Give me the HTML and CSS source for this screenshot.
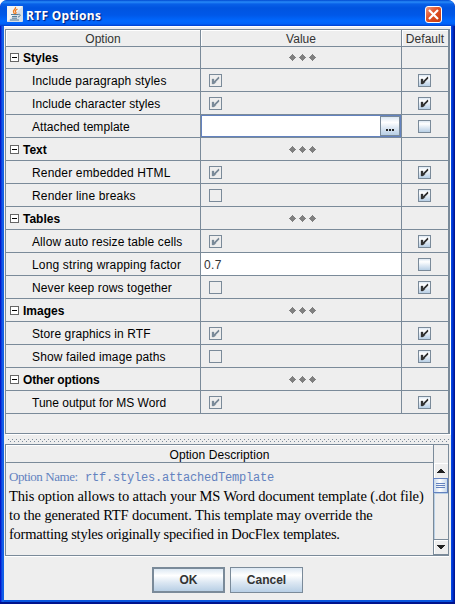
FILE: index.html
```html
<!DOCTYPE html>
<html lang="en">
<head>
<meta charset="utf-8">
<title>RTF Options</title>
<link rel="stylesheet" href="styles.css">
</head>
<body>
<svg class="defs" width="0" height="0" aria-hidden="true">
  <defs>
    <symbol id="tick" viewBox="0 0 13 13"><path d="M3 5h2v2h1V6h1V5h1V4h1V3h1v2H9v1H8v1H7v1.500H6v1H5v.5H3z" fill="currentColor" stroke="currentColor" stroke-width=".3"/></symbol>
    <symbol id="diamonds" viewBox="0 0 27 7"><path d="M3 0h1v1h1v1h1v1h1v1H6v1H5v1H4v1H3V6H2V5H1V4H0V3h1V2h1V1h1zM13 0h1v1h1v1h1v1h1v1h-1v1h-1v1h-1v1h-1V6h-1V5h-1V4h-1V3h1V2h1V1h1zM23 0h1v1h1v1h1v1h1v1h-1v1h-1v1h-1v1h-1V6h-1V5h-1V4h-1V3h1V2h1V1h1z" fill="#808080"/></symbol>
  </defs>
</svg>
<div class="window">
  <header class="titlebar">
    <svg class="java" width="16" height="16" viewBox="0 0 16 16">
      <rect width="16" height="16" rx="1" fill="#d9dfe5"/><path d="M0 0h16L0 16z" fill="#f3f4f4"/>
      <path d="M8.5 1c1 2-3 3-2 5l1 2M10.5 3c-2 1-3 2-1.500 3.500L8.500 8" fill="none" stroke="#ef7d22" stroke-width="1.300"/>
      <path d="M4 8.500h7M5 10.500h5M5 12.200h5M3 14h9M11 8.500c3-1 3 2 0 2.500" fill="none" stroke="#567f9b"/>
    </svg>
    <h1>RTF Options</h1>
    <button class="close" aria-label="Close"><svg width="15" height="15" viewBox="0 0 15 15"><path d="M3 3l9 9M12 3l-9 9" stroke="#fff" stroke-width="2.200"/></svg></button>
  </header>
  <main class="content">
    <section class="table">
      <div class="row head"><div>Option</div><div>Value</div><div class="def">Default</div></div>
      <div class="row group"><div><i></i><b>Styles</b></div><div><svg><use href="#diamonds"/></svg></div><div></div></div>
      <div class="row"><div><span class="w1">Include paragraph styles</span></div><div><span class="box off"><svg><use href="#tick"/></svg></span></div><div><span class="box"><svg><use href="#tick"/></svg></span></div></div>
      <div class="row"><div><span class="w2">Include character styles</span></div><div><span class="box off"><svg><use href="#tick"/></svg></span></div><div><span class="box"><svg><use href="#tick"/></svg></span></div></div>
      <div class="row"><div><span class="w3">Attached template</span></div><div class="edit"><button class="more" aria-label="Browse"><svg width="8" height="2" viewBox="0 0 8 2"><path d="M0 0h2v2H0zM3 0h2v2H3zM6 0h2v2H6z" fill="#222"/></svg></button></div><div><span class="box"></span></div></div>
      <div class="row group"><div><i></i><b>Text</b></div><div><svg><use href="#diamonds"/></svg></div><div></div></div>
      <div class="row"><div><span class="w4">Render embedded HTML</span></div><div><span class="box off"><svg><use href="#tick"/></svg></span></div><div><span class="box"><svg><use href="#tick"/></svg></span></div></div>
      <div class="row"><div><span class="w5">Render line breaks</span></div><div><span class="box off"></span></div><div><span class="box"><svg><use href="#tick"/></svg></span></div></div>
      <div class="row group"><div><i></i><b>Tables</b></div><div><svg><use href="#diamonds"/></svg></div><div></div></div>
      <div class="row"><div><span class="w6">Allow auto resize table cells</span></div><div><span class="box off"><svg><use href="#tick"/></svg></span></div><div><span class="box"><svg><use href="#tick"/></svg></span></div></div>
      <div class="row"><div><span class="w7">Long string wrapping factor</span></div><div class="num">0.7</div><div><span class="box"></span></div></div>
      <div class="row"><div><span class="w8">Never keep rows together</span></div><div><span class="box off"></span></div><div><span class="box"><svg><use href="#tick"/></svg></span></div></div>
      <div class="row group"><div><i></i><b>Images</b></div><div><svg><use href="#diamonds"/></svg></div><div></div></div>
      <div class="row"><div><span class="w9">Store graphics in RTF</span></div><div><span class="box off"><svg><use href="#tick"/></svg></span></div><div><span class="box"><svg><use href="#tick"/></svg></span></div></div>
      <div class="row"><div><span class="w10">Show failed image paths</span></div><div><span class="box off"></span></div><div><span class="box"><svg><use href="#tick"/></svg></span></div></div>
      <div class="row group"><div><i></i><b class="other">Other options</b></div><div><svg><use href="#diamonds"/></svg></div><div></div></div>
      <div class="row"><div><span class="w11">Tune output for MS Word</span></div><div><span class="box off"><svg><use href="#tick"/></svg></span></div><div><span class="box"><svg><use href="#tick"/></svg></span></div></div>
    </section>
    <div class="splitter"></div>
    <section class="description">
      <div class="desc-main">
        <h2>Option Description</h2>
        <div class="text">
          <p class="name"><span>Option Name:</span> <code>rtf.styles.attachedTemplate</code></p>
          <p class="l1">This option allows to attach your MS Word document template (.dot file)</p>
          <p class="l2">to the generated RTF document. This template may override the</p>
          <p class="l3">formatting styles originally specified in DocFlex templates.</p>
        </div>
      </div>
      <div class="scroll">
        <div class="corner"></div>
        <div class="arrow"><svg width="8" height="4" viewBox="0 0 8 4"><path d="M3 0h2v1h1v1h1v1h1v1H0V3h1V2h1V1h1z" fill="#222"/></svg></div>
        <div class="thumb"><svg width="9" height="5" viewBox="0 0 9 5"><path d="M0 0h9v1H0zM0 2h9v1H0zM0 4h9v1H0z" fill="#6382bf"/></svg></div>
        <div class="track"></div>
        <div class="arrow down"><svg width="8" height="4" viewBox="0 0 8 4"><path d="M0 0h8v1H7v1H6v1H5v1H3V3H2V2H1V1H0z" fill="#222"/></svg></div>
      </div>
    </section>
    <footer><button class="ok">OK</button><button>Cancel</button></footer>
  </main>
</div>
</body>
</html>
```
FILE: styles.css
```css
* { box-sizing: border-box; }
body { margin: 0; background: #fff; font: 12px/15px "Liberation Sans", Arial, sans-serif; color: #000; }
.defs { display: none; }
h1, h2, p { margin: 0; font-weight: normal; }
button { padding: 0; border-radius: 0; font: inherit; }
.window {
  width: 455px; height: 604px; padding: 0 4px 4px; overflow: hidden;
  border-radius: 7px 7px 0 0;
  background: linear-gradient(90deg, #0000b8 0, #0831d9 1px, #166aee 3px, #0855dd 4px, #0855dd 451px, #003ce6 452px, #001ea0 454px, #00138c 455px);
  box-shadow: inset 0 -2px #00138c;
}
.titlebar {
  height: 26px; margin: 0 -4px; padding: 3px 4px 0 7px; display: flex; align-items: center;
  border-radius: 7px 7px 0 0;
  background: linear-gradient(#0048d0 0, #278af8 2px, #0860e8 4px, #0054e0 8px, #0058e8 15px, #0068ff 21px, #0062f8 24px, #003dcc 26px);
}
.java { margin-top: -1px; }
h1 { margin: 2px 0 0 3px; color: #fff; font: bold 12px/18px "Noto Sans", "Open Sans", sans-serif; text-shadow: 1px 1px 1px #001b78; white-space: nowrap; letter-spacing: .32px; }
.close { width: 17px; height: 17px; margin-left: auto; margin-right: 9px; border: 1px solid #fff; border-radius: 3px; background: linear-gradient(135deg, #ee9780, #e25024 45%, #c23b10); display: grid; place-items: center; }
.close svg { display: block; }
.content { height: 574px; padding: 3px 1px 0; background: #eee; border-top: 1px solid #fff; }
.table { width: 445px; height: 405px; margin-top: -1px; border: 1px solid #7a8a99; border-right-width: 2px; box-shadow: 1px 1px #fff; }
.row { height: 23px; display: grid; grid-template-columns: 195px 201px 46px; }
.row > div { display: flex; align-items: center; border-right: 1px solid #7a8a99; border-bottom: 1px solid #7a8a99; padding-left: 8px; white-space: nowrap; }
.row > div:first-child { padding-left: 26px; }
.row > div:last-child { padding-left: 16px; border-right: 0; }
.row.group > div:first-child { padding-left: 4px; }
.row.group > div:nth-child(2) { padding-left: 88px; }
.row.group svg { width: 27px; height: 7px; }
.row.group i { width: 9px; height: 9px; margin-right: 4px; border: 1px solid #666; background: linear-gradient(#000, #000) center / 5px 1px no-repeat #fff; }
.row span:not(.box), .row b { padding-top: 2px; }
.w1, .w4, .w7 { letter-spacing: .16px; }
.w2, .w6, .w8, .w9 { letter-spacing: .1px; }
.w3 { letter-spacing: .06px; }
.w5 { letter-spacing: .17px; }
.w10 { letter-spacing: .13px; }
.other { letter-spacing: -.17px; }
.row.head { height: 16px; color: #333; line-height: 14px; }
.row.head > div, .row.head > div:first-child, .row.head > div:last-child { justify-content: center; padding: 2px 0 0; box-shadow: inset 1px 1px #fff; }
.row.head .def { letter-spacing: .05px; }
.box { width: 13px; height: 13px; border: 1px solid #7a8a99; color: #333; background: linear-gradient(#dde8f3 0, #fff 25%, #dde8f3 60%, #b8cfe5); }
.box svg { display: block; width: 13px; height: 13px; margin: -1px; }
.box.off { background: none; color: #7a8a99; }
.row > .edit { padding: 0; justify-content: flex-end; background: #fff; box-shadow: inset 0 0 0 1px #6382bf; }
.more { width: 20px; height: 20px; margin-right: 1px; border: 1px solid #7a8a99; background: linear-gradient(#dde8f3, #fff 30%, #dde8f3 60%, #b8cfe5); display: flex; justify-content: center; align-items: flex-end; padding-bottom: 4px; }
.row > .num { padding: 2px 0 0 3px; background: #fff; color: #333; letter-spacing: .4px; }
.splitter {
  height: 3px; margin: 5px 1px 2px 3px;
  background: conic-gradient(from 0deg at 1px 1px, transparent 75%, #7a8a99 0) 0 0 / 4px 4px repeat-x,
    conic-gradient(from 0deg at 1px 1px, transparent 75%, #7a8a99 0) 2px 2px / 4px 4px repeat-x;
}
.description { display: flex; width: 444px; height: 112px; border: 1px solid #7a8a99; box-shadow: 0 1px #fff; }
.desc-main { flex: 1; min-width: 0; }
h2 { height: 18px; border-bottom: 1px solid #7a8a99; box-shadow: inset 1px 1px #fff; text-align: center; font-size: 12px; line-height: 20px; letter-spacing: .07px; }
.text { padding: 5px 0 0 3px; font: 14.500px/19px "Liberation Serif", "Times New Roman", serif; white-space: nowrap; }
.name { font-size: 13px; line-height: 18px; color: #6382bf; }
.name span { letter-spacing: -.45px; }
.name code { font: 12px/18px "Liberation Mono", monospace; letter-spacing: -.2px; margin-left: 4px; }
.l1 { letter-spacing: -.13px; }
.l2 { letter-spacing: -.12px; }
.l3 { letter-spacing: -.24px; }
.scroll { width: 15px; display: flex; flex-direction: column; border-left: 1px solid #7a8a99; }
.corner { height: 18px; }
.arrow { height: 15px; display: grid; place-items: center; box-shadow: inset 1px 1px #fff; }
.arrow.down { height: 16px; border-top: 1px solid #7a8a99; border-bottom: 1px solid #7a8a99; }
.thumb { height: 15px; margin-left: -1px; border: 1px solid #6382bf; background: linear-gradient(90deg, #c8d9eb, #fff 45%, #c8d9eb); display: grid; place-items: center; }
.track { flex: 1; border-left: 1px solid #b8cfe5; border-top: 1px solid #b8cfe5; }
footer { display: flex; justify-content: center; gap: 5px; padding: 11px 0 0; }
footer button { width: 73px; height: 26px; border: 1px solid #7a8a99; background: linear-gradient(#dde8f3, #fff 30%, #dde8f3 60%, #b8cfe5); color: #333; font-weight: bold; padding-top: 1px; }
footer .ok { border-width: 2px; }
```
